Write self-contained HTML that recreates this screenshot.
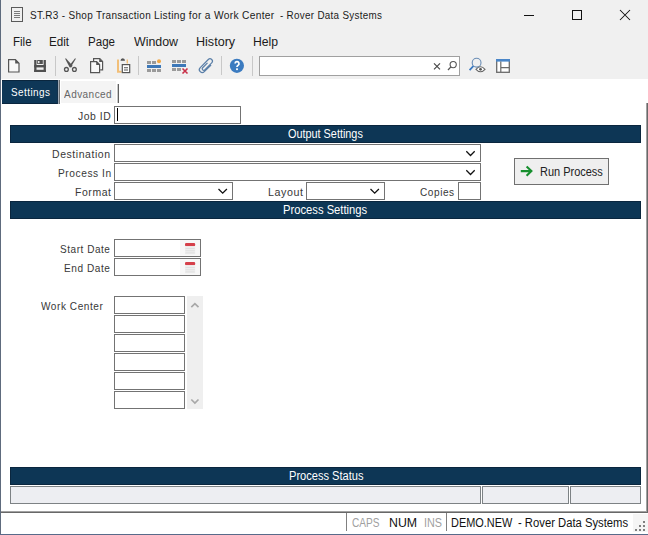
<!DOCTYPE html>
<html><head><meta charset="utf-8">
<style>
*{margin:0;padding:0;box-sizing:border-box}
html,body{width:648px;height:535px;overflow:hidden;background:#f0f0f0;font-family:"Liberation Sans",sans-serif;}
#win{position:absolute;left:0;top:0;width:648px;height:535px;background:#f0f0f0;overflow:hidden}
.a{position:absolute}
.tx{position:absolute;white-space:nowrap;line-height:20px;transform-origin:0 0;font-family:"Liberation Sans",sans-serif}
.sep{position:absolute;width:1px;background:#c8c8c8}
.hdr{position:absolute;left:10px;width:631px;height:18px;background:#0d3655;border:1px solid #0a263e}
.inp{position:absolute;background:#fff;border:1px solid #737373}
.sf{position:absolute;background:#edeef2;border:1px solid #7d8285;top:486px;height:18px}

</style></head><body>
<div id="win">
<!-- title bar icon -->
<svg class="a" style="left:0;top:0" width="648" height="80" viewBox="0 0 648 80">
  <!-- doc icon -->
  <rect x="11.5" y="7.5" width="11" height="14" fill="none" stroke="#5a5a5a"/>
  <path d="M14 11.5h6M14 13.5h6M14 15.5h6M14 17.5h6" stroke="#7a7a7a"/>
  <!-- window controls -->
  <path d="M524 15.5h10" stroke="#111"/>
  <rect x="572.5" y="10.5" width="9" height="9" fill="none" stroke="#111"/>
  <path d="M620 10L630 20M630 10L620 20" stroke="#111" stroke-width="1.05"/>
  <!-- new doc -->
  <path d="M8.6 59.6h6.8l3.6 3.6v8.8h-10.4z" fill="#f8f8f8" stroke="#555" stroke-width="1.2"/>
  <path d="M15.2 59.2l4.2 4.2h-4.2z" fill="#555"/>
  <!-- save -->
  <g fill="#505050">
  <rect x="34.2" y="60" width="2.3" height="12"/>
  <rect x="43.6" y="60" width="2.3" height="12"/>
  <rect x="34.2" y="69.8" width="11.7" height="2.2"/>
  <rect x="34.2" y="65" width="11.7" height="2.4"/>
  <rect x="37.2" y="60" width="5.6" height="4"/>
  </g>
  <rect x="38" y="61" width="1.5" height="2.2" fill="#e8e8e8"/>
  <!-- separators -->
  <!-- cut -->
  <circle cx="66.4" cy="69.4" r="1.9" fill="none" stroke="#555" stroke-width="1.3"/>
  <circle cx="74.4" cy="69.4" r="1.9" fill="none" stroke="#555" stroke-width="1.3"/>
  <path d="M65 58.6L66.1 58.6L72.6 65.8L71.2 67.4L69.6 67.2z" fill="#555"/>
  <path d="M76 58.6L74.9 58.6L70.2 64.4L71.8 65.6z" fill="#555"/>
  <!-- copy -->
  <path d="M93.6 61V58.6h6.2l2.8 2.8v8.4h-2.4" fill="#f8f8f8" stroke="#555" stroke-width="1.2"/>
  <path d="M99.2 58.4l3.6 3.6h-3.6z" fill="#555"/>
  <path d="M90.6 61.6h6l3 3v8h-9z" fill="#f8f8f8" stroke="#555" stroke-width="1.2"/>
  <path d="M96.2 61.3l3.6 3.6h-3.6z" fill="#555"/>
  <!-- paste -->
  <path d="M118 59.5v12.3h3.5" fill="none" stroke="#f2bf78" stroke-width="2"/>
  <path d="M127.3 59.5v4" stroke="#f2bf78" stroke-width="1.4"/>
  <path d="M120.5 60.8q0-2.6 2.25-2.6t2.25 2.6z" fill="#555"/>
  <rect x="122.3" y="64.6" width="7.4" height="8" fill="#fff" stroke="#555" stroke-width="1.2"/>
  <path d="M124 67.8h4M124 70h4" stroke="#555" stroke-width="1.1"/>
  <!-- insert row -->
  <rect x="147" y="61" width="4" height="3" fill="#9a9a9a"/>
  <rect x="152" y="61" width="4" height="3" fill="#9a9a9a"/>
  <circle cx="159" cy="61.3" r="2" fill="#f0a848"/>
  <rect x="147" y="65" width="14" height="3" fill="#3d78b8"/>
  <rect x="147" y="69" width="4" height="3" fill="#9a9a9a"/>
  <rect x="152" y="69" width="4" height="3" fill="#9a9a9a"/>
  <rect x="157" y="69" width="4" height="3" fill="#9a9a9a"/>
  <!-- delete row -->
  <rect x="172" y="60" width="4" height="3" fill="#9a9a9a"/>
  <rect x="177" y="60" width="4" height="3" fill="#9a9a9a"/>
  <rect x="182" y="60" width="4" height="3" fill="#9a9a9a"/>
  <rect x="172" y="64" width="14" height="3" fill="#3d78b8"/>
  <rect x="172" y="68" width="4" height="3" fill="#9a9a9a"/>
  <rect x="177" y="68" width="4" height="3" fill="#9a9a9a"/>
  <path d="M182.5 68.5l5 5M187.5 68.5l-5 5" stroke="#c83048" stroke-width="1.6"/>
  <!-- paperclip -->
  <path transform="translate(206.1,65.8) rotate(-45) translate(-8.4,0)" d="M12.5 2.9H3A2.9 2.9 0 0 1 3 -2.9H14.4A2.4 2.4 0 0 1 14.4 1.9H4.6A1.5 1.5 0 0 1 4.6 -1.1H11.5" fill="none" stroke="#5a7fa8" stroke-width="1.2"/>
  <!-- help -->
  <circle cx="236.9" cy="65.8" r="7.1" fill="#3b7bc0"/>
  <path d="M235.1 63.6a1.95 1.95 0 1 1 2.8 1.8c-0.7 0.35-0.9 0.7-0.9 1.4v0.3" fill="none" stroke="#fff" stroke-width="1.7"/>
  <rect x="236.1" y="68.3" width="1.8" height="1.8" fill="#fff"/>
  <!-- search box -->
  <rect x="259.5" y="56.5" width="200" height="19" fill="#fff" stroke="#a0a0a0"/>
  <path d="M434 63.3l6 6M440 63.3l-6 6" stroke="#4a4a4a" stroke-width="1.2"/>
  <circle cx="453.2" cy="64.6" r="3.1" fill="none" stroke="#555" stroke-width="1.1"/>
  <path d="M450.9 66.9L448 70" stroke="#555" stroke-width="1.3"/>
  <!-- preview -->
  <circle cx="476.6" cy="62.7" r="4.4" fill="none" stroke="#6a8db5" stroke-width="1.1"/>
  <path d="M473.4 66L469.6 70.2" stroke="#3a78c0" stroke-width="1.8"/>
  <path d="M476 69.3q4.5-5 9 0q-4.5 5-9 0z" fill="#fff" stroke="#666" stroke-width="1.1"/>
  <circle cx="480.5" cy="69.3" r="1.4" fill="#555"/>
  <!-- layout icon -->
  <rect x="496.7" y="59.7" width="12.6" height="12.6" fill="#fff" stroke="#6a6a6a" stroke-width="1.3"/>
  <rect x="496" y="59" width="14" height="2.6" fill="#4a86c8"/>
  <path d="M500.8 61.5v10.5M501 67.6h8.5" stroke="#6a6a6a" stroke-width="1.2"/>
</svg>
<div class="sep" style="left:55px;top:56px;height:20px"></div>
<div class="sep" style="left:138px;top:56px;height:19px"></div>
<div class="sep" style="left:221px;top:56px;height:19px"></div>
<div class="sep" style="left:252px;top:56px;height:20px"></div>

<!-- content -->
<div class="a" style="left:1px;top:79px;width:647px;height:433px;background:#fff"></div>
<!-- tabs -->
<div class="a" style="left:2px;top:80px;width:56px;height:24px;background:#0e3757;border-top:1px solid #0a263e;border-bottom:1px solid #0a263e"></div>
<div class="a" style="left:57px;top:80px;width:1px;height:24px;background:#12304a"></div>
<div class="a" style="left:58px;top:80px;width:1px;height:24px;background:#a0aab5"></div>
<div class="a" style="left:59px;top:80px;width:1px;height:24px;background:#6a6e72"></div>
<div class="a" style="left:61px;top:81px;width:55px;height:22px;background:#f4f4f4"></div>
<div class="a" style="left:118px;top:84px;width:1px;height:19px;background:#606060"></div><div class="a" style="left:117px;top:84px;width:1px;height:19px;background:#c8c8c8"></div>

<!-- form -->
<div class="inp" style="left:114px;top:106px;width:127px;height:18px"></div>
<div class="a" style="left:117px;top:108px;width:1px;height:13px;background:#000"></div>
<div class="hdr" style="top:125px"></div>
<div class="inp" style="left:114px;top:144px;width:367px;height:18px"></div>
<div class="inp" style="left:114px;top:163px;width:367px;height:18px"></div>
<div class="inp" style="left:114px;top:182px;width:119px;height:18px"></div>
<div class="inp" style="left:306px;top:182px;width:79px;height:18px"></div>
<div class="inp" style="left:458px;top:182px;width:23px;height:18px"></div>
<svg class="a" style="left:0;top:140px" width="648" height="65" viewBox="0 140 648 65">
  <path d="M466.3 151.3l4.2 4.2l4.2-4.2M466.3 170.3l4.2 4.2l4.2-4.2M218.5 189l4.2 4.2l4.2-4.2M370.5 189l4.2 4.2l4.2-4.2" fill="none" stroke="#111" stroke-width="1.3"/>
</svg>
<div class="a" style="left:514px;top:158px;width:95px;height:27px;background:#efefef;border:1px solid #707070"></div>
<svg class="a" style="left:518px;top:163px" width="18" height="18" viewBox="518 163 18 18">
  <path d="M520.8 171.1h10.6M526.6 166.4l4.8 4.7l-4.8 4.7" fill="none" stroke="#178f2e" stroke-width="2.1"/>
</svg>
<div class="hdr" style="top:201px"></div>

<div class="inp" style="left:114px;top:239px;width:87px;height:18px"></div>
<div class="inp" style="left:114px;top:258px;width:87px;height:18px"></div>
<svg class="a" style="left:180px;top:240px" width="20" height="36" viewBox="180 240 20 36">
  <rect x="180" y="240" width="20" height="16" fill="#f7f7f7"/>
  <rect x="180" y="259" width="20" height="16" fill="#f7f7f7"/>
  <g id="cal">
  <rect x="185" y="243" width="10.2" height="3.2" rx="1.2" fill="#d5404a"/>
  <rect x="185" y="246.2" width="10.2" height="8" fill="#eeeeee"/>
  <path d="M185.5 248.5h9.2M185.5 250.7h9.2M185.5 252.9h9.2" stroke="#dcdcdc" stroke-width="0.8"/>
  </g>
  <use href="#cal" transform="translate(0,19)"/>
</svg>

<div class="inp" style="left:114px;top:296px;width:71px;height:18px"></div>
<div class="inp" style="left:114px;top:315px;width:71px;height:18px"></div>
<div class="inp" style="left:114px;top:334px;width:71px;height:18px"></div>
<div class="inp" style="left:114px;top:353px;width:71px;height:18px"></div>
<div class="inp" style="left:114px;top:372px;width:71px;height:18px"></div>
<div class="inp" style="left:114px;top:391px;width:71px;height:18px"></div>
<div class="a" style="left:187px;top:296px;width:16px;height:113px;background:#efefef"></div>
<svg class="a" style="left:187px;top:296px" width="16" height="113" viewBox="187 296 16 113">
  <path d="M191.3 307.2l3.6-3.6l3.6 3.6M191.3 399.5l3.6 3.6l3.6-3.6" fill="none" stroke="#a8a8a8" stroke-width="1.7"/>
</svg>

<div class="hdr" style="top:467px"></div>
<div class="sf" style="left:10px;width:471px"></div>
<div class="sf" style="left:482px;width:87px"></div>
<div class="sf" style="left:570px;width:71px"></div>

<!-- status bar -->
<div class="a" style="left:1px;top:511px;width:647px;height:1px;background:#a2a2a2"></div><div class="a" style="left:1px;top:512px;width:647px;height:1px;background:#686868"></div>
<div class="a" style="left:1px;top:513px;width:647px;height:21px;background:#ffffff"></div>
<div class="a" style="left:633px;top:514px;width:15px;height:18px;background:#f5f5f5"></div>
<div class="a" style="left:346px;top:513px;width:1px;height:18px;background:#808080"></div>
<div class="a" style="left:446px;top:513px;width:1px;height:18px;background:#808080"></div>
<div class="a" style="left:643px;top:521px;width:2px;height:2px;background:#808080"></div>
<div class="a" style="left:639px;top:525px;width:2px;height:2px;background:#808080"></div>
<div class="a" style="left:643px;top:525px;width:2px;height:2px;background:#808080"></div>
<div class="a" style="left:635px;top:529px;width:2px;height:2px;background:#808080"></div>
<div class="a" style="left:639px;top:529px;width:2px;height:2px;background:#808080"></div>
<div class="a" style="left:643px;top:529px;width:2px;height:2px;background:#808080"></div>
<!-- window borders -->
<div class="a" style="left:0;top:0;width:1px;height:535px;background:#5e6b7d"></div>
<div class="a" style="left:646px;top:103px;width:1px;height:409px;background:#a2a2a2"></div>
<div class="a" style="left:647px;top:103px;width:1px;height:409px;background:#686868"></div>
<div class="a" style="left:0;top:534px;width:648px;height:1px;background:#586b8a"></div>

<div class="tx" id="title1" style="left:30.00px;top:5.02px;font-size:11.5px;color:#1b1b1b;transform:scaleX(0.8683);letter-spacing:0.35px;">ST.R3 - Shop Transaction</div>
<div class="tx" id="title2" style="left:153.71px;top:5.02px;font-size:11.5px;color:#1b1b1b;transform:scaleX(0.8881);letter-spacing:0.35px;">Listing for a Work Center</div>
<div class="tx" id="title3" style="left:280.00px;top:5.02px;font-size:11.5px;color:#1b1b1b;transform:scaleX(0.8555);letter-spacing:0.35px;">- Rover Data Systems</div>
<div class="tx" id="File" style="left:12.64px;top:31.84px;font-size:12px;color:#1b1b1b;transform:scaleX(0.9611);">File</div>
<div class="tx" id="Edit" style="left:49.43px;top:31.84px;font-size:12px;color:#1b1b1b;transform:scaleX(0.9700);">Edit</div>
<div class="tx" id="Page" style="left:88.24px;top:31.84px;font-size:12px;color:#1b1b1b;transform:scaleX(0.9630);">Page</div>
<div class="tx" id="Window" style="left:133.70px;top:31.84px;font-size:12px;color:#1b1b1b;transform:scaleX(1.0326);">Window</div>
<div class="tx" id="History" style="left:196.15px;top:31.84px;font-size:12px;color:#1b1b1b;transform:scaleX(1.0472);">History</div>
<div class="tx" id="Help" style="left:253.18px;top:31.84px;font-size:12px;color:#1b1b1b;transform:scaleX(1.0167);">Help</div>
<div class="tx" id="Settings" style="left:10.70px;top:82.19px;font-size:11px;color:#ffffff;transform:scaleX(0.9000);letter-spacing:0.5px;">Settings</div>
<div class="tx" id="Advanced" style="left:63.80px;top:84.19px;font-size:11px;color:#666666;transform:scaleX(0.9096);letter-spacing:0.5px;">Advanced</div>
<div class="tx" id="JobID" style="left:77.90px;top:106.19px;font-size:11px;color:#383838;transform:scaleX(0.9429);letter-spacing:0.6px;">Job ID</div>
<div class="tx" id="Destination" style="left:52.35px;top:144.19px;font-size:11px;color:#383838;transform:scaleX(0.9517);letter-spacing:0.6px;">Destination</div>
<div class="tx" id="ProcessIn" style="left:57.57px;top:163.19px;font-size:11px;color:#383838;transform:scaleX(0.9268);letter-spacing:0.6px;">Process In</div>
<div class="tx" id="Format" style="left:74.85px;top:182.19px;font-size:11px;color:#383838;transform:scaleX(0.9514);letter-spacing:0.6px;">Format</div>
<div class="tx" id="Layout" style="left:267.63px;top:182.19px;font-size:11px;color:#383838;transform:scaleX(0.9714);letter-spacing:0.6px;">Layout</div>
<div class="tx" id="Copies" style="left:420.40px;top:182.19px;font-size:11px;color:#383838;transform:scaleX(0.9162);letter-spacing:0.6px;">Copies</div>
<div class="tx" id="Run" style="left:539.79px;top:161.84px;font-size:12px;color:#222222;transform:scaleX(0.9147);">Run Process</div>
<div class="tx" id="OS" style="left:288.30px;top:123.84px;font-size:12px;color:#ffffff;transform:scaleX(0.9048);">Output Settings</div>
<div class="tx" id="PS" style="left:283.47px;top:199.84px;font-size:12px;color:#ffffff;transform:scaleX(0.9348);">Process Settings</div>
<div class="tx" id="PSt" style="left:288.58px;top:465.84px;font-size:12px;color:#ffffff;transform:scaleX(0.9237);">Process Status</div>
<div class="tx" id="SD" style="left:59.60px;top:239.19px;font-size:11px;color:#383838;transform:scaleX(0.9091);letter-spacing:0.6px;">Start Date</div>
<div class="tx" id="ED" style="left:63.78px;top:258.19px;font-size:11px;color:#383838;transform:scaleX(0.9163);letter-spacing:0.6px;">End Date</div>
<div class="tx" id="WC" style="left:40.60px;top:296.19px;font-size:11px;color:#383838;transform:scaleX(0.9147);letter-spacing:0.6px;">Work Center</div>
<div class="tx" id="CAPS" style="left:352.00px;top:512.84px;font-size:12px;color:#a0a0a0;transform:scaleX(0.8424);">CAPS</div>
<div class="tx" id="NUM" style="left:388.57px;top:512.84px;font-size:12px;color:#111111;transform:scaleX(1.0269);">NUM</div>
<div class="tx" id="INS" style="left:423.90px;top:512.84px;font-size:12px;color:#a0a0a0;transform:scaleX(0.9000);">INS</div>
<div class="tx" id="DEMO1" style="left:450.99px;top:512.84px;font-size:12px;color:#111111;transform:scaleX(0.9104);">DEMO.NEW</div>
<div class="tx" id="DEMO2" style="left:517.50px;top:512.84px;font-size:12px;color:#111111;transform:scaleX(0.9376);">- Rover Data Systems</div>
</div>
</body></html>
